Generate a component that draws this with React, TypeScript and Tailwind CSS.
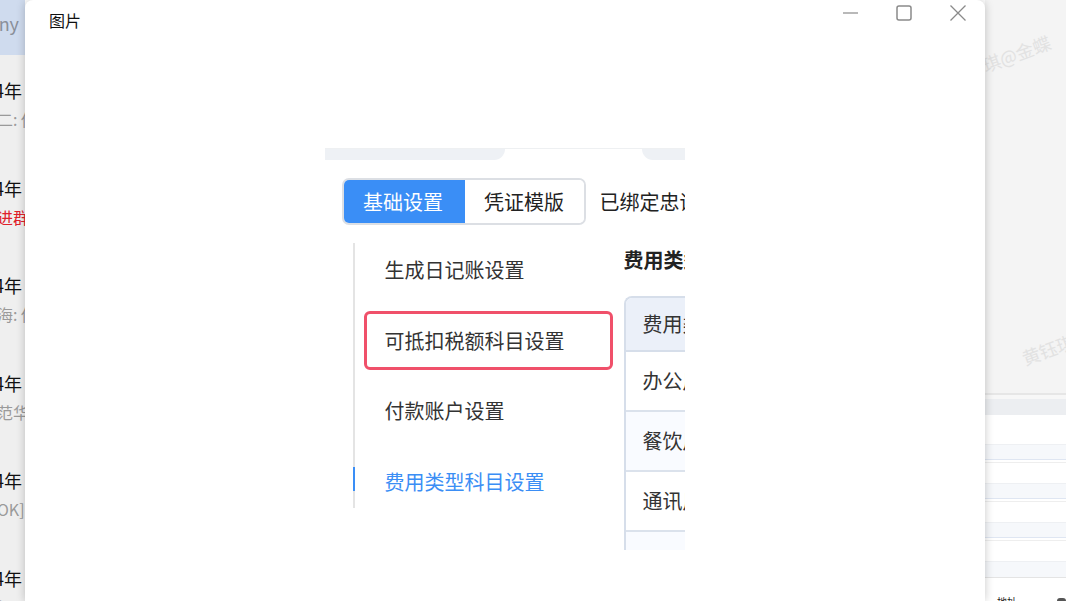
const cjk = { fontFamily: '"Noto Sans CJK SC", "Noto Sans", sans-serif' };

const chats = [
  { sub: '二: 你好', red: false },
  { sub: '进群了', red: true },
  { sub: '海: 你好', red: false },
  { sub: '范华', red: false },
  { sub: 'OK]', red: false },
  { sub: '好', red: false },
];

const menu = ['生成日记账设置', '可抵扣税额科目设置', '付款账户设置', '费用类型科目设置'];
const rows = ['办公', '餐饮', '通讯', ''];

function ChatStrip() {
  return (
    <div className="w-[25px] h-full bg-[#efefef] overflow-hidden shrink-0">
      <div className="h-[55px] bg-[#cfdbee] pt-[10px] text-[18px] text-[#8a8f99] whitespace-nowrap ml-[-34px]">
        Sunny
      </div>
      {chats.map((c, i) => (
        <div key={i} className="h-[97.5px] pt-[22px] whitespace-nowrap ml-[-36px]">
          <div className="text-[18px] leading-[26px] text-[#111]">2024年</div>
          <div className={`text-[16px] leading-[24px] mt-[4px] ml-[1px] ${c.red ? 'text-[#e0202a]' : 'text-[#9a9a9a]'}`}>
            {'　　' + c.sub}
          </div>
        </div>
      ))}
    </div>
  );
}

function RightPane() {
  return (
    <div className="flex-1 h-full flex flex-col bg-white overflow-hidden">
      <div className="h-[393px] bg-[#f4f4f4] relative shrink-0">
        <span className="absolute left-[-4px] top-[40px] -rotate-[20deg] text-[18px] text-[#e2e2e2] whitespace-nowrap">
          琪@金蝶
        </span>
        <span className="absolute left-[36px] top-[336px] -rotate-[20deg] text-[18px] text-[#e2e2e2] whitespace-nowrap">
          黄钰琪
        </span>
      </div>
      <div className="h-[6px] border-t-2 border-[#e6e6e6] bg-[#f7f7f7]" />
      <div className="h-[16px] bg-[#eceef1]" />
      <div className="h-[29px] bg-white" />
      {[0, 1, 2].map((i) => (
        <div key={i}>
          <div className="h-[15px] bg-[#f6f8fb] border-t border-[#eef0f3]" />
          <div className="h-[3px] border-t border-[#dfe6f2]" />
          <div className="h-[21px] bg-white border-t border-[#eeeeee]" />
        </div>
      ))}
      <div className="h-[16px] bg-[#f6f8fb] border-t border-[#eef0f3]" />
      <div className="h-[2px] border-t border-[#e4e4e4]" />
      <div className="flex items-end gap-[40px] pl-[12px] flex-1 overflow-hidden whitespace-nowrap">
        <span className="text-[10px] leading-[10px] text-[#222] translate-y-[6px]">地址</span>
        <span className="w-[20px] h-[3px] bg-[#555] rounded-t-sm" />
      </div>
    </div>
  );
}

function Screenshot() {
  return (
    <div className="w-[360px] h-[405px] bg-white overflow-hidden mx-auto text-[#333]" style={cjk}>
      {/* top bar remnants */}
      <div className="mt-[3px] h-[12px] flex border-t border-[#eef0f2]">
        <div className="w-[180px] bg-[#eef1f5] rounded-br-[12px]" />
        <div className="flex-1" />
        <div className="w-[43px] bg-[#eef1f5] rounded-bl-[12px]" />
      </div>

      {/* tabs */}
      <div className="flex items-center mt-[18px] pl-[17px] whitespace-nowrap">
        <div className="flex shrink-0 h-[47px] rounded-[7px] overflow-hidden border-2 border-[#dcdfe4]">
          <div className="w-[123px] shrink-0 -ml-[2px] -my-[2px] bg-[#3a8ef6] text-white text-[20px] flex items-center justify-center rounded-l-[7px]">
            基础设置
          </div>
          <div className="w-[119px] shrink-0 bg-white text-[20px] text-[#222] flex items-center justify-center">
            凭证模版
          </div>
        </div>
        <span className="ml-[14px] shrink-0 text-[20px] text-[#222]">已绑定忠诚度</span>
      </div>

      <div className="flex mt-[18px]">
        {/* side menu */}
        <div className="ml-[28px] w-[2px] h-[265px] bg-[#e4e4e4] flex flex-col shrink-0">
          <div className="h-[224px]" />
          <div className="h-[24px] bg-[#3a8ef6]" />
        </div>
        <div className="w-[269px] shrink-0 -mt-[8px] whitespace-nowrap">
          {menu.map((m, i) => (
            <div key={m} className="h-[70.5px] flex items-center pl-[9px]">
              <div
                className={`h-[59px] flex items-center w-[249px] rounded-[6px] text-[20px] ${
                  i === 1 ? 'border-[3px] border-[#f0506a] pl-[18px]' : 'pl-[21px]'
                } ${i === 3 ? 'text-[#3b8ef5]' : 'text-[#333]'}`}
              >
                {m}
              </div>
            </div>
          ))}
        </div>

        {/* right panel */}
        <div className="flex-1 mt-[5px] whitespace-nowrap overflow-hidden">
          <div className="text-[20px] font-bold text-[#222] leading-[24px] mb-[24px]">费用类型科目</div>
          <div className="border-l-2 border-t-2 border-[#d6deea] rounded-tl-[8px] text-[20px] text-[#333]">
            <div className="h-[54px] bg-[#ebf0f9] flex items-center pl-[17px] border-b-2 border-[#d6deea] rounded-tl-[6px]">
              费用类型
            </div>
            {rows.map((r, i) => (
              <div
                key={i}
                className={`h-[60px] flex items-center pl-[17px] border-b-2 border-[#dbe2ec] ${
                  i % 2 === 1 ? 'bg-[#f9fbff]' : 'bg-white'
                }`}
              >
                {r && r + '用品'}
              </div>
            ))}
          </div>
        </div>
      </div>
    </div>
  );
}

function ImageWindow() {
  return (
    <div className="absolute left-[25px] top-0 w-[960px] h-[601px] bg-white rounded-t-[8px] shadow-[0_0_10px_rgba(0,0,0,0.22)] flex flex-col" style={cjk}>
      <div className="h-[40px] flex items-center shrink-0">
        <span className="ml-[24px] text-[16px] text-[#111]">图片</span>
        <div className="ml-auto flex items-center -mt-[14px]">
          <div className="w-[54px] h-[16px] flex items-center justify-center">
            <svg width="15" height="2" viewBox="0 0 15 2">
              <line x1="0" y1="1" x2="15" y2="1" stroke="#8a8a8a" strokeWidth="1.2" />
            </svg>
          </div>
          <div className="w-[54px] h-[16px] flex items-center justify-center">
            <svg width="16" height="16" viewBox="0 0 16 16">
              <rect x="1" y="1" width="14" height="14" rx="2" fill="none" stroke="#8a8a8a" strokeWidth="1.5" />
            </svg>
          </div>
          <div className="w-[54px] h-[16px] flex items-center justify-center">
            <svg width="16" height="16" viewBox="0 0 16 16">
              <path d="M0.5 0.5L15.5 15.5M15.5 0.5L0.5 15.5" stroke="#8a8a8a" strokeWidth="1.3" />
            </svg>
          </div>
        </div>
      </div>
      <div className="pt-[105px] pr-[1px]">
        <Screenshot />
      </div>
    </div>
  );
}

export default function App() {
  return (
    <div className="w-[1066px] h-[601px] relative overflow-hidden flex bg-white" style={cjk}>
      <ChatStrip />
      <div className="w-[960px] shrink-0" />
      <RightPane />
      <ImageWindow />
    </div>
  );
}
